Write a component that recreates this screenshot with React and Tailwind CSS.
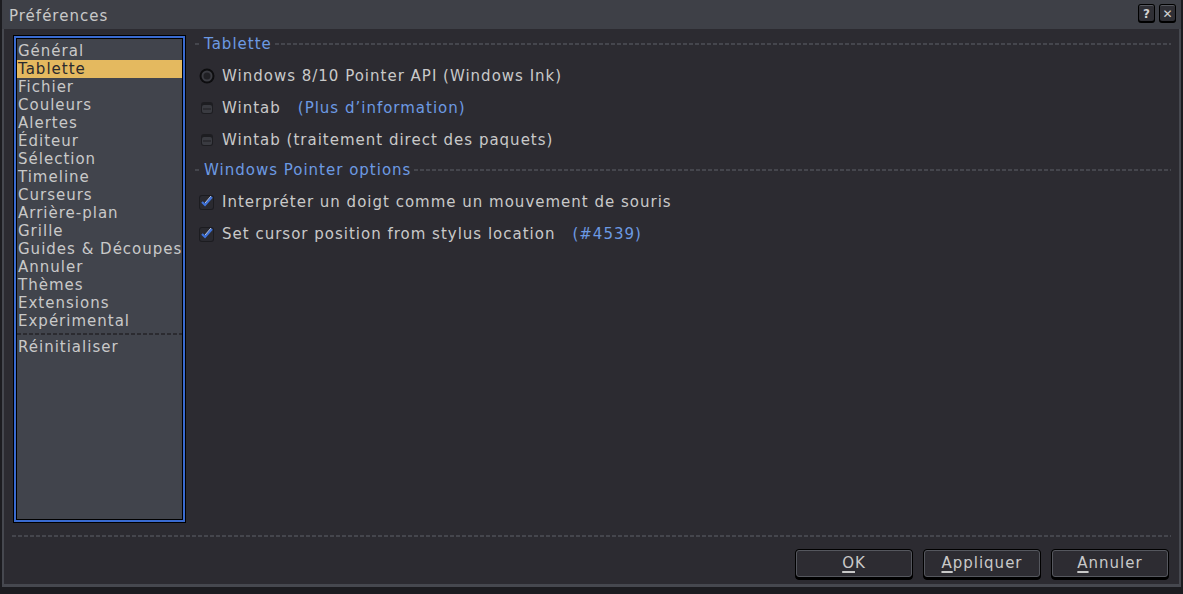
import { useState } from 'react';

const font = { fontFamily: '"DejaVu Sans", "Liberation Sans", sans-serif' };

const sections = [
    'Général', 'Tablette', 'Fichier', 'Couleurs', 'Alertes', 'Éditeur', 'Sélection', 'Timeline',
    'Curseurs', 'Arrière-plan', 'Grille', 'Guides & Découpes', 'Annuler', 'Thèmes', 'Extensions', 'Expérimental',
];

const Dashes = ({ className = '' }) => (
    <div className={`h-[2px] bg-[repeating-linear-gradient(90deg,#45464d_0_4px,transparent_4px_6px)] ${className}`} />
);

const SectionHeader = ({ title, className = '' }) => (
    <div className={`flex items-center h-[18px] ${className}`}>
        <Dashes className="w-[6px] shrink-0" />
        <span className="px-[3px] text-[#6c9ae3]">{title}</span>
        <Dashes className="flex-1" />
    </div>
);

const RadioOn = () => (
    <svg width="16" height="16" viewBox="0 0 16 16" className="shrink-0">
        <circle cx="8" cy="8" r="7.5" fill="#0d0d0f" />
        <circle cx="8" cy="8" r="5.5" fill="#3b3c42" />
        <circle cx="8" cy="8" r="3.5" fill="#202024" />
    </svg>
);

const RadioOff = () => (
    <svg width="16" height="16" viewBox="0 0 16 16" className="shrink-0">
        <rect x="2" y="2" width="12" height="12" rx="3" fill="#1d1d21" />
        <rect x="3" y="5" width="10" height="8" rx="2" fill="#3a3b41" />
        <rect x="4" y="8" width="8" height="2" fill="#2c2c31" />
    </svg>
);

const Check = () => (
    <svg width="16" height="16" viewBox="0 0 16 16" className="shrink-0">
        <rect x="0" y="1" width="15" height="15" rx="3" fill="#1c1c20" />
        <rect x="1" y="2" width="13" height="13" rx="2" fill="#2a2a30" />
        <path d="M3 8 L6 11 L13 3" stroke="#3f72d8" strokeWidth="2.2" fill="none" />
        <path d="M6 9 L12 2" stroke="#b9c9ec" strokeWidth="1" fill="none" />
    </svg>
);

const DialogButton = ({ first, rest }) => (
    <button className="w-[118px] h-[31px] rounded-[4px] border border-black bg-black pb-[2px]">
        <div className="h-full rounded-[3px] border border-[#55575e] bg-[#2d2c32] flex items-center justify-center text-[#c9c9c9] text-[15px] tracking-[1px]">
            <span className="underline decoration-2 underline-offset-[3px]">{first}</span>{rest}
        </div>
    </button>
);

const TitleButton = ({ children }) => (
    <div className="w-[17px] h-[19px] rounded-[3px] bg-black p-[1px] pb-[2px]">
        <div className="w-full h-full rounded-[2px] bg-[#2f2f35] border-t border-[#55575e] flex items-center justify-center text-[#d2d2d2] text-[12px] font-bold leading-none">
            {children}
        </div>
    </div>
);

export default function App() {
    const [selected, setSelected] = useState('Tablette');

    return (
        <div style={font} className="w-[1183px] h-[594px] bg-[#1c1c20] pl-[2px] pr-[2px] pb-[7px] flex flex-col overflow-hidden">
            <div className="flex-1 flex flex-col bg-[#2c2b31] border-x-2 border-b-[3px] border-[#46484f]">
                {/* Title bar */}
                <div className="h-[29px] -mx-[2px] bg-[#3e4047] flex items-center pl-[7px] pr-[5px] shrink-0">
                    <span className="text-[#c9c9c9] text-[15px] tracking-[1px] pt-[3px]">Préférences</span>
                    <div className="ml-auto flex gap-[4px] -mt-[2px]">
                        <TitleButton>?</TitleButton>
                        <TitleButton>✕</TitleButton>
                    </div>
                </div>

                <div className="flex-1 flex pl-[9px] pr-[8px] pt-[6px]">
                    {/* Section list */}
                    <div className="w-[173px] h-[488px] bg-black p-[1px] shrink-0">
                        <div className="w-full h-full bg-[#3a6bd0] p-[2px]">
                            <div className="w-full h-full bg-black p-[1px]">
                                <div className="w-full h-full bg-[#41444c] pt-[3px] text-[15px] tracking-[1px] text-[#c9c9c9]">
                                    {sections.map((s) => (
                                        <div
                                            key={s}
                                            onClick={() => setSelected(s)}
                                            className={`h-[18px] leading-[18px] pl-[1px] whitespace-nowrap ${selected === s ? 'bg-[#e4b95f] text-[#2a2a2e]' : ''}`}
                                        >
                                            {s}
                                        </div>
                                    ))}
                                    <div className="h-[8px] flex items-center">
                                        <div className="w-full h-[2px] bg-[repeating-linear-gradient(90deg,#2b2b30_0_4px,transparent_4px_6px)]" />
                                    </div>
                                    <div className="h-[18px] leading-[18px] pl-[1px]">Réinitialiser</div>
                                </div>
                            </div>
                        </div>
                    </div>

                    {/* Tablet options */}
                    <div className="flex-1 pl-[9px] flex flex-col text-[15px] tracking-[1px] text-[#c9c9c9]">
                        <SectionHeader title="Tablette" />
                        <div className="mt-[7px] h-[32px] flex items-center gap-[7px] pl-[4px]">
                            <RadioOn />
                            <span>Windows 8/10 Pointer API (Windows Ink)</span>
                        </div>
                        <div className="h-[32px] flex items-center gap-[7px] pl-[4px]">
                            <RadioOff />
                            <span>Wintab</span>
                            <span className="ml-[10px] text-[#6c9ae3]">(Plus d’information)</span>
                        </div>
                        <div className="h-[32px] flex items-center gap-[7px] pl-[4px]">
                            <RadioOff />
                            <span>Wintab (traitement direct des paquets)</span>
                        </div>

                        <SectionHeader title="Windows Pointer options" className="mt-[5px]" />
                        <div className="mt-[7px] h-[32px] flex items-center gap-[7px] pl-[4px]">
                            <Check />
                            <span>Interpréter un doigt comme un mouvement de souris</span>
                        </div>
                        <div className="h-[32px] flex items-center gap-[7px] pl-[4px]">
                            <Check />
                            <span>Set cursor position from stylus location</span>
                            <span className="ml-[10px] text-[#6c9ae3]">(#4539)</span>
                        </div>
                    </div>
                </div>

                {/* Footer */}
                <div className="px-[8px] pt-[12px] shrink-0">
                    <Dashes />
                </div>
                <div className="flex justify-end gap-[10px] pr-[10px] pt-[12px] pb-[4px] shrink-0">
                    <DialogButton first="O" rest="K" />
                    <DialogButton first="A" rest="ppliquer" />
                    <DialogButton first="A" rest="nnuler" />
                </div>
            </div>
        </div>
    );
}
